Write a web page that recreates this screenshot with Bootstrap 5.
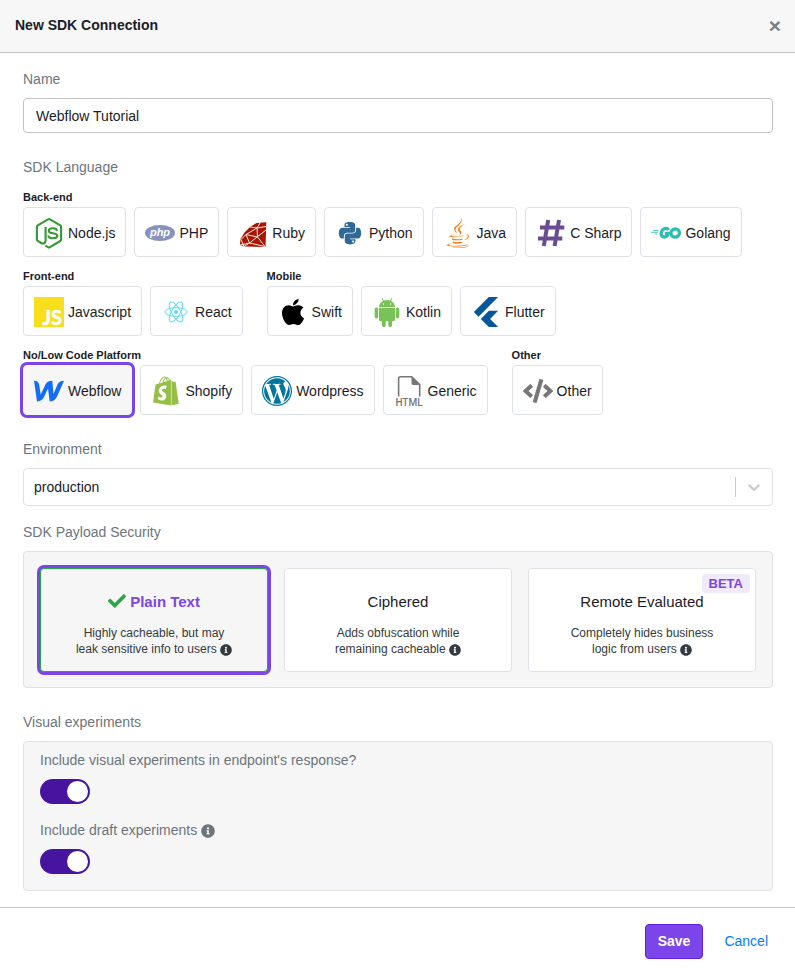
<!DOCTYPE html>
<html lang="en">
<head>
<meta charset="utf-8">
<meta name="viewport" content="width=device-width, initial-scale=1">
<title>New SDK Connection</title>
<link href="https://cdn.jsdelivr.net/npm/bootstrap@5.3.0/dist/css/bootstrap.min.css" rel="stylesheet">
<style>
  :root { --ink: #1c1c28; --accent: #7c45e9; --line: #dee2e6; --soft: #f6f6f6; }
  body { font-family: "Liberation Sans", Arial, sans-serif; font-size: 14px; line-height: 21px; color: var(--ink); }
  .dialog-head { background: #f7f7f7; border-bottom: 1px solid #c4c4c4; padding: 15px 14px 15px 15px; height: 53px; }
  .dialog-head h1 { font-size: 14px; line-height: 21px; }
  .close-x { font-size: 21px; line-height: 21px; color: #7f7f7f; padding: 0; }
  .dialog-body { padding: 16px 22px 16px 23px; }
  .dialog-foot { border-top: 1px solid #c4c4c4; padding: 16px 14px; }
  .field-label { color: #6c757d; margin-bottom: 8px; display: block; }
  .lang-label { margin-bottom: 10px; }
  .name-input { font-size: 14px; line-height: 21px; color: var(--ink); border-color: #c4c4c4; border-radius: 4px; padding: 7px 12px 5px; }
  .env-select {
    font-size: 14px; line-height: 20px; color: var(--ink); height: 38px; padding: 8px 60px 8px 10px;
    border-color: var(--line); border-radius: 4px;
    background-image: url("data:image/svg+xml,%3Csvg xmlns='http://www.w3.org/2000/svg' viewBox='0 0 20 20'%3E%3Cpath fill='%23ccc' d='M4.516 7.548c0.436-0.446 1.043-0.481 1.576 0l3.908 3.747 3.908-3.747c0.533-0.481 1.141-0.446 1.574 0 0.436 0.445 0.408 1.197 0 1.615-0.406 0.418-4.695 4.502-4.695 4.502-0.217 0.223-0.502 0.335-0.787 0.335s-0.57-0.112-0.789-0.335c0 0-4.287-4.084-4.695-4.502s-0.436-1.17 0-1.615z'/%3E%3C/svg%3E"), linear-gradient(#ccc, #ccc);
    background-position: right 8px center, right 36px center;
    background-size: 20px 20px, 1px 20px;
  }
  .lang-groups { row-gap: 10px; column-gap: 24px; }
  .group-name { font-size: 11px; line-height: 19px; font-weight: 700; margin: 0; white-space: nowrap; }
  .lang-btn, .secure-btn { background: #fff; border: 1px solid var(--line); border-radius: 4px; color: var(--ink); }
  .lang-btn { padding: 10px 10px 8px; height: 50px; gap: 4px; }
  .lang-btn svg { width: 30px; height: 30px; flex: none; overflow: visible; }
  .is-picked { background: var(--soft); border-color: var(--soft); box-shadow: 0 0 0 3px var(--accent); }
  .panel { background: var(--soft); border: 1px solid var(--line); border-radius: 4px; }
  .security { padding: 16px 16px 15px; }
  .secure-btn { padding: 22px 4px 14px; flex: 1 1 0; }
  .secure-btn.is-picked { background: var(--soft); border-color: #28a745; }
  .secure-title { font-size: 15px; line-height: 22px; margin-bottom: 12px; display: block; }
  .is-picked .secure-title { color: var(--accent); font-weight: 700; }
  .secure-text { font-size: 12px; line-height: 16px; color: #343a40; display: block; }
  .tick { width: 18px; height: 18px; vertical-align: -3px; fill: #28a745; }
  .info { width: 12px; height: 12px; vertical-align: -3px; fill: currentColor; }
  .info-lg { width: 14px; height: 14px; vertical-align: -3px; fill: currentColor; }
  .beta { top: 5px; right: 5px; background: #f1eafc; color: var(--accent); font-size: 13px; font-weight: 700; line-height: 19px; padding: 0 7px; border-radius: 4px; }
  .experiments { padding: 8px 16px 16px; }
  .toggle.form-check-input {
    width: 50px; height: 25px; margin: 0; display: block; float: none; border: 0; background-color: #46149f; background-size: 21px 21px;
    background-position: right 2px center; background-repeat: no-repeat; border-radius: 13px;
    background-image: url("data:image/svg+xml,%3Csvg xmlns='http://www.w3.org/2000/svg' viewBox='0 0 21 21'%3E%3Ccircle cx='10.5' cy='10.5' r='10.5' fill='%23fff'/%3E%3C/svg%3E");
  }
  .toggle.form-check-input:not(:checked) { background-color: #adb5bd; background-position: left 2px center; }
  .foot-btn { font-size: 14px; line-height: 21px; padding: 6px 12px; border-radius: 4px; }
  .save-btn, .save-btn:hover { background: var(--accent); border-color: #6320e0; color: #fff; font-weight: 700; }
  .cancel-btn { color: #007bff; text-decoration: none; }
</style>
<script src="https://cdn.jsdelivr.net/npm/bootstrap@5.3.0/dist/js/bootstrap.bundle.min.js"></script>
</head>
<body>
<svg class="d-none" aria-hidden="true">
  <symbol id="info" viewBox="0 0 512 512"><path d="M256 8C119.043 8 8 119.083 8 256c0 136.997 111.043 248 248 248s248-111.003 248-248C504 119.083 392.957 8 256 8zm0 110c23.196 0 42 18.804 42 42s-18.804 42-42 42-42-18.804-42-42 18.804-42 42-42zm56 254c0 6.627-5.373 12-12 12h-88c-6.627 0-12-5.373-12-12v-24c0-6.627 5.373-12 12-12h12v-64h-12c-6.627 0-12-5.373-12-12v-24c0-6.627 5.373-12 12-12h64c6.627 0 12 5.373 12 12v100h12c6.627 0 12 5.373 12 12v24z"/></symbol>
</svg>
<form>
  <header class="dialog-head d-flex justify-content-between align-items-start">
    <h1 class="fw-bold m-0">New SDK Connection</h1>
    <button type="button" class="close-x border-0 bg-transparent fw-bold" aria-label="Close">×</button>
  </header>

  <main class="dialog-body">
    <div class="mb-4">
      <label class="field-label" for="sdk-name">Name</label>
      <input class="form-control name-input" id="sdk-name" type="text" value="Webflow Tutorial">
    </div>

    <div class="mb-4">
      <div class="field-label lang-label" id="lang-label">SDK Language</div>
      <div class="d-flex flex-wrap lang-groups" role="group" aria-labelledby="lang-label">
        <section>
          <h2 class="group-name">Back-end</h2>
          <div class="d-flex flex-wrap gap-2">
            <button type="button" class="lang-btn d-flex align-items-center">
              <svg viewBox="0 1 30 30" fill="none" stroke="#339933" stroke-width="2.1" stroke-linejoin="round" aria-hidden="true"><path d="M11.6 10v13.600c0 2.600-2.200 3.600-4.300 2.400l-3.600-2.100c-.5-.3-.8-.8-.8-1.300V9.800c0-.6.3-1.100.8-1.400L14 2.300c.6-.4 1.400-.4 2 0l10.300 6.100c.5.3.8.8.8 1.400v12.800c0 .6-.3 1.100-.8 1.400L16 30.200c-.6.4-1.400.4-2 0l-2.600-1.500"/><path d="M23 13.800c-.2-2-1.800-2.500-4.200-2.500-2.500 0-4 .8-4 2.500 0 2 2 2.300 4.200 2.500 2.700.3 4.200.7 4.200 2.500s-1.500 2.500-4.200 2.500c-3 0-4.500-.8-4.700-3"/></svg>
              Node.js</button>
            <button type="button" class="lang-btn d-flex align-items-center">
              <svg viewBox="0 0 30 30" aria-hidden="true"><ellipse cx="15" cy="15" rx="15" ry="8" fill="#8892bf"/><text x="15" y="18" text-anchor="middle" font-size="11" font-weight="700" font-style="italic" fill="#fff">php</text></svg>
              PHP</button>
            <button type="button" class="lang-btn d-flex align-items-center">
              <svg viewBox="0 0 30 30" aria-hidden="true"><path fill="#aa1401" d="M28.300 4.200 27.500 29 6.500 28.500 1.900 27 2.500 21 6.500 14.500 12 9 18.500 5z"/><path fill="none" stroke="#fff" stroke-width=".9" d="M3 21.500 8 16.500 19 10 28 8.500M8 16.500l3.500 8.500L28 12M11.500 25 2 27M3 21.500l3 7 5.500-3.500L27 28.500 19.500 19 19 10l-7-1M19 10l3-5M8 16.500l11.500 2.500"/></svg>
              Ruby</button>
            <button type="button" class="lang-btn d-flex align-items-center">
              <svg viewBox="-76 -48 600 600" fill="#306998" aria-hidden="true"><path d="M439.8 200.5c-7.700-30.900-22.300-54.200-53.400-54.200h-40.100v47.400c0 36.800-31.200 67.800-66.800 67.800H172.700c-29.200 0-53.400 25-53.400 54.300v101.800c0 29 25.200 46 53.400 54.300 33.800 9.900 66.300 11.700 106.800 0 26.900-7.800 53.400-23.500 53.400-54.300v-40.700H226.200v-13.600h160.200c31.100 0 42.600-21.700 53.400-54.200 11.200-33.500 10.700-65.700 0-108.600zM286.200 404c11.100 0 20.100 9.100 20.100 20.300 0 11.300-9 20.400-20.100 20.400-11 0-20.100-9.200-20.100-20.400.1-11.300 9.100-20.300 20.100-20.300zM167.800 248.100h106.800c29.700 0 53.400-24.500 53.400-54.400V91.900c0-29-24.400-50.700-53.400-55.600-35.800-5.900-74.700-5.600-106.800.1-45.200 8-53.400 24.700-53.400 55.600v40.700h106.900v13.600h-147c-31.100 0-58.300 18.700-66.800 54.200-9.800 40.700-10.200 66.100 0 108.600 7.600 31.600 25.700 54.200 56.800 54.200H101v-48.800c0-35.300 30.500-66.400 66.800-66.400zm-6.700-142.600c-11.100 0-20.100-9.100-20.100-20.300.1-11.300 9-20.400 20.100-20.400 11 0 20.100 9.200 20.100 20.400s-9 20.300-20.100 20.300z"/></svg>
              Python</button>
            <button type="button" class="lang-btn d-flex align-items-center">
              <svg viewBox="0 0 384 512" fill="#f58219" aria-hidden="true"><path d="M277.740 312.900c9.800-6.700 23.400-12.500 23.400-12.500s-38.700 7-77.200 10.200c-47.100 3.900-97.700 4.700-123.100 1.300-60.100-8 33-30.100 33-30.100s-36.100-2.400-80.600 19c-52.500 25.400 130 37 224.500 12.100zm-85.400-32.100c-19-42.700-83.100-80.200 0-145.800C296 53.200 242.840 0 242.840 0c21.500 84.500-75.600 110.100-110.700 162.600-23.900 35.900 11.700 74.400 60.200 118.200zm114.600-176.200c.1 0-175.200 43.800-91.500 140.200 24.700 28.400-6.500 54-6.500 54s62.700-32.400 33.900-72.900c-26.900-37.800-47.500-56.600 64.100-121.300zm-6.100 270.500a12.190 12.190 0 0 1-2 2.600c128.300-33.700 81.100-118.900 19.800-97.300a17.330 17.330 0 0 0-8.200 6.300 70.450 70.450 0 0 1 11-3c31-6.500 75.500 41.500-20.600 91.400zM348 437.400s14.500 11.900-15.900 21.200c-57.900 17.500-240.800 22.800-291.600.7-18.300-7.900 16-19 26.800-21.300 11.200-2.400 17.700-2 17.700-2-20.300-14.300-131.300 28.100-56.400 40.200C232.840 509.400 401 461.300 348 437.400zM124.440 396c-78.700 22 47.900 67.400 148.100 24.500a185.890 185.890 0 0 1-28.200-13.800c-44.700 8.500-65.400 9.100-106 4.500-33.500-3.800-13.900-15.200-13.900-15.200zm179.800 97.200c-78.700 14.800-175.800 13.100-233.300 3.600 0-.1 11.800 9.700 72.400 13.600 92.200 5.900 233.800-3.300 237.100-46.900 0 0-6.400 16.500-76.200 29.700zM260.640 353c-59.200 11.400-93.500 11.100-136.800 6.600-33.500-3.500-11.600-19.700-11.600-19.700-86.800 28.800 48.200 61.400 169.500 25.900a60.370 60.370 0 0 1-21.100-12.800z"/></svg>
              Java</button>
            <button type="button" class="lang-btn d-flex align-items-center">
              <svg viewBox="0 0 30 30" stroke="#684d95" stroke-width="4" aria-hidden="true"><path d="M12.200 2 7.800 28M23 2l-4.400 26M4 9.500h24.300M2 20.500h24.300"/></svg>
              C Sharp</button>
            <button type="button" class="lang-btn d-flex align-items-center">
              <svg viewBox="0 0 30 30" aria-hidden="true"><path stroke="#2dbcaf" stroke-width=".8" d="M2 12.500h5.500M0 14.300h7M4 16h2.500"/><g fill="none" stroke="#2dbcaf" stroke-width="3.300"><path d="M17.600 12c-1.200-2.200-4-1.800-5.600-.4-2.200 2-2.700 5.600-.2 7 2.500 1.200 5.200-.6 5.700-3.300h-3.700"/><ellipse cx="24.200" cy="15" rx="4.300" ry="4" transform="rotate(-30 24.200 15)"/></g></svg>
              Golang</button>
          </div>
        </section>
        <div class="w-100 d-flex flex-wrap lang-groups">
          <section>
            <h2 class="group-name">Front-end</h2>
            <div class="d-flex flex-wrap gap-2">
              <button type="button" class="lang-btn d-flex align-items-center">
                <svg viewBox="0 0 30 30" aria-hidden="true"><path fill="#f7df1e" d="M0 0h30v30H0z"/><text x="28" y="28" text-anchor="end" font-family="Lato, sans-serif" font-size="20" font-weight="700" fill="#fff" stroke="#fff" stroke-width=".5">JS</text></svg>
                Javascript</button>
              <button type="button" class="lang-btn d-flex align-items-center">
                <svg viewBox="0 0 30 30" fill="none" stroke="#61dafb" aria-hidden="true"><circle cx="15" cy="15" r="2.100" fill="#61dafb" stroke="none"/><ellipse cx="15" cy="15" rx="11.200" ry="4.300"/><ellipse cx="15" cy="15" rx="11.200" ry="4.300" transform="rotate(60 15 15)"/><ellipse cx="15" cy="15" rx="11.200" ry="4.300" transform="rotate(120 15 15)"/></svg>
                React</button>
            </div>
          </section>
          <section>
            <h2 class="group-name">Mobile</h2>
            <div class="d-flex flex-wrap gap-2">
              <button type="button" class="lang-btn d-flex align-items-center">
                <svg viewBox="-64 0 512 512" aria-hidden="true"><path d="M318.700 268.700c-.2-36.700 16.400-64.400 50-84.800-18.800-26.900-47.200-41.700-84.700-44.600-35.500-2.800-74.300 20.700-88.500 20.700-15 0-49.400-19.700-76.400-19.700C63.300 141.200 4 184.800 4 273.500q0 39.300 14.400 81.200c12.800 36.700 59 126.700 107.200 125.200 25.200-.6 43-17.900 75.800-17.900 31.800 0 48.300 17.900 76.400 17.900 48.600-.7 90.400-82.500 102.600-119.300-65.200-30.700-61.700-90-61.700-91.900zm-56.600-164.200c27.300-32.400 24.800-61.900 24-72.500-24.100 1.400-52 16.400-67.900 34.900-17.500 19.800-27.800 44.300-25.600 71.900 26.100 2 49.900-11.400 69.500-34.300z"/></svg>
                Swift</button>
              <button type="button" class="lang-btn d-flex align-items-center">
                <svg viewBox="0 0 30 30" fill="#78c257" aria-hidden="true"><path d="M7 10.300c0-3 1.700-5.300 4-6.400L9.700 1.400l.6-.4 1.500 2.500a9.500 9.500 0 0 1 6.400 0L19.700 1l.6.4L19 3.900c2.300 1.100 4 3.400 4 6.400z"/><path d="M7 11h16v11.500c0 1-.8 1.700-1.700 1.700H20v4c0 2.400-3.700 2.400-3.700 0v-4h-2.600v4c0 2.400-3.700 2.400-3.700 0v-4H8.700c-1 0-1.700-.7-1.700-1.700z"/><rect x="2.700" y="10.500" width="3.500" height="11" rx="1.750"/><rect x="23.800" y="10.500" width="3.500" height="11" rx="1.750"/><circle cx="11.400" cy="7" r=".7" fill="#fff"/><circle cx="18.600" cy="7" r=".7" fill="#fff"/></svg>
                Kotlin</button>
              <button type="button" class="lang-btn d-flex align-items-center">
                <svg viewBox="0 0 24 24" fill="#02569b" aria-hidden="true"><path d="M14.314 0L2.300 12 6 15.700 21.684.013h-7.357zm.014 11.072L7.857 17.530l6.470 6.470H21.700l-6.460-6.468 6.460-6.460h-7.370z"/></svg>
                Flutter</button>
            </div>
          </section>
        </div>
        <div class="w-100 d-flex flex-wrap lang-groups">
          <section>
            <h2 class="group-name">No/Low Code Platform</h2>
            <div class="d-flex flex-wrap gap-2">
              <button type="button" class="lang-btn is-picked d-flex align-items-center" aria-pressed="true">
                <svg viewBox="0 0 30 30" fill="#146ef5" aria-hidden="true"><path d="M0 4.800C3.500 4.800 5 6.500 5.300 9.500L6.700 18.500 11.500 8.500C12.800 6 14.500 4.800 18.300 4.800L19.500 18 23.500 8.500C24.800 6 26.700 4.800 30 4.800L23.500 19.500C22 23 19.800 25.400 15.700 25.400L14 12.500 10.500 20C8.900 23.500 7 25.400 3 25.400Z"/></svg>
                Webflow</button>
              <button type="button" class="lang-btn d-flex align-items-center">
                <svg viewBox="0 0 448 512" fill="#95bf47" aria-hidden="true"><path d="M388.320,104.100a4.660,4.660,0,0,0-4.400-4c-2,0-37.230-.8-37.230-.8s-21.610-20.820-29.620-28.830V503.200L442.760,472S388.720,106.500,388.320,104.100ZM288.650,70.470a116.670,116.670,0,0,0-7.210-17.610C271,32.850,255.420,22,237,22a15,15,0,0,0-4,.4c-.4-.8-1.200-1.200-1.600-2C223.400,11.630,213,7.630,200.580,8c-24,.8-48,18-67.250,48.830-13.610,21.620-24,48.840-26.820,70.060-27.620,8.400-46.830,14.410-47.230,14.810-14,4.400-14.410,4.800-16,18-1.200,10-38,291.820-38,291.820L307.860,504V65.670a41.660,41.660,0,0,0-4.400.4S297.860,67.670,288.650,70.470ZM233.410,87.690c-16,4.800-33.630,10.400-50.840,15.610,4.800-18.820,14.410-37.630,25.620-50,4.400-4.400,10.410-9.610,17.210-12.810C232.210,54.860,233.810,74.480,233.410,87.690ZM200.580,24.440A27.490,27.490,0,0,1,215,28c-6.400,3.200-12.810,8.410-18.810,14.410-15.210,16.420-26.820,42-31.620,66.450-14.420,4.410-28.830,8.810-42,12.810C131.330,83.280,163.750,25.240,200.580,24.440ZM154.150,244.610c1.600,25.610,69.250,31.220,73.250,91.660,2.800,47.640-25.220,80.060-65.650,82.470-48.830,3.200-75.650-25.620-75.650-25.620l10.400-44s26.820,20.420,48.440,18.820c14-.8,19.220-12.410,18.810-20.420-2-33.620-57.240-31.620-60.840-86.860-3.200-46.440,27.220-93.270,94.470-97.680,26-1.600,39.230,4.810,39.230,4.810L221.400,225.390s-17.210-8-37.630-6.400C154.150,221,153.750,239.800,154.150,244.610ZM249.420,82.880c0-12-1.600-29.220-7.210-43.630,18.420,3.600,27.220,24,31.230,36.430Q262.630,78.680,249.420,82.880Z"/></svg>
                Shopify</button>
              <button type="button" class="lang-btn d-flex align-items-center">
                <svg viewBox="8 8 496 496" fill="#00769d" aria-hidden="true"><path d="M61.700 169.400l101.500 278C92.200 413 43.300 340.200 43.300 256c0-30.900 6.600-60.100 18.400-86.600zm337.900 75.900c0-26.300-9.400-44.500-17.500-58.700-10.800-17.500-20.900-32.400-20.900-49.900 0-19.600 14.800-37.800 35.700-37.800.9 0 1.800.1 2.800.2-37.900-34.700-88.300-55.900-143.700-55.900-74.300 0-139.700 38.100-177.800 95.900 5 .2 9.700.3 13.700.3 22.200 0 56.700-2.700 56.700-2.700 11.500-.7 12.800 16.200 1.400 17.500 0 0-11.500 1.300-24.300 2l77.500 230.400L249.800 247l-33.100-90.800c-11.500-.7-22.300-2-22.300-2-11.500-.7-10.100-18.200 1.300-17.500 0 0 35.100 2.700 56 2.700 22.200 0 56.700-2.700 56.700-2.700 11.500-.7 12.800 16.200 1.400 17.500 0 0-11.500 1.300-24.300 2l76.900 228.700 21.200-70.900c9-29.400 16-50.500 16-68.700zm-139.900 29.300l-63.800 185.500c19.100 5.600 39.200 8.700 60.100 8.700 24.800 0 48.500-4.300 70.600-12.100-.6-.9-1.100-1.900-1.500-2.900l-65.400-179.200zm183-120.700c.9 6.800 1.400 14 1.400 21.900 0 21.600-4 45.800-16.200 76.200l-65 187.900C426.200 403 468.700 334.500 468.700 256c0-37-9.400-71.800-26-102.100zM504 256c0 136.800-111.300 248-248 248C119.200 504 8 392.700 8 256 8 119.200 119.200 8 256 8c136.700 0 248 111.200 248 248zm-20 0C484 130 382 28 256 28S28 130 28 256s102 228 228 228 228-102 228-228z"/></svg>
                Wordpress</button>
              <button type="button" class="lang-btn d-flex align-items-center">
                <svg viewBox="0 0 30 30" aria-hidden="true"><path fill="none" stroke="#777" stroke-width="1.600" d="M4.600 20.500V2.700c0-1.200.8-2 2-2h11.200L25.700 8.500v12"/><path fill="#777" d="M17.500.5 26 9h-6.500c-1.200 0-2-.8-2-2z"/><text x="15" y="30" text-anchor="middle" font-family="Roboto, sans-serif" font-size="10" font-weight="500" fill="#777">HTML</text></svg>
                Generic</button>
            </div>
          </section>
          <section>
            <h2 class="group-name">Other</h2>
            <div class="d-flex flex-wrap gap-2">
              <button type="button" class="lang-btn d-flex align-items-center">
                <svg viewBox="0 0 640 512" fill="#777" aria-hidden="true"><path d="M278.900 511.500l-61-17.700c-6.400-1.800-10-8.500-8.200-14.900L346.200 8.700c1.800-6.400 8.500-10 14.900-8.200l61 17.700c6.400 1.800 10 8.500 8.200 14.900L293.800 503.300c-1.900 6.400-8.500 10.100-14.900 8.200zm-114-112.200l43.500-46.400c4.600-4.900 4.300-12.700-.8-17.200L117 256l90.600-79.700c5.100-4.500 5.500-12.300.8-17.200l-43.500-46.400c-4.500-4.800-12.100-5.100-17-.5L3.800 247.200c-5.100 4.700-5.100 12.800 0 17.500l144.100 135.100c4.900 4.600 12.500 4.400 17-.5zm327.200.6l144.100-135.100c5.100-4.700 5.100-12.800 0-17.500L492.100 112.100c-4.800-4.500-12.400-4.300-17 .5L431.600 159c-4.600 4.900-4.300 12.700.8 17.200L523 256l-90.600 79.700c-5.100 4.500-5.500 12.300-.8 17.200l43.500 46.400c4.500 4.900 12.100 5.100 17 .6z"/></svg>
                Other</button>
            </div>
          </section>
        </div>
      </div>
    </div>

    <div class="mb-3">
      <label class="field-label" for="sdk-env">Environment</label>
      <select class="form-select env-select" id="sdk-env">
        <option selected>production</option>
      </select>
    </div>

    <div class="mb-4">
      <div class="field-label" id="security-label">SDK Payload Security</div>
      <div class="panel security d-flex gap-3" role="group" aria-labelledby="security-label">
        <button type="button" class="secure-btn is-picked" aria-pressed="true">
          <span class="secure-title"><svg class="tick" viewBox="0 0 512 512" aria-hidden="true"><path d="M173.898 439.404l-166.400-166.400c-9.997-9.997-9.997-26.206 0-36.204l36.203-36.204c9.997-9.998 26.207-9.998 36.204 0L192 312.690 432.095 72.596c9.997-9.997 26.207-9.997 36.204 0l36.203 36.204c9.997 9.997 9.997 26.206 0 36.204l-294.400 294.401c-9.998 9.997-26.207 9.997-36.204-.001z"/></svg> Plain Text</span>
          <span class="secure-text">Highly cacheable, but may<br>leak sensitive info to users <svg class="info" aria-hidden="true"><use href="#info"/></svg></span>
        </button>
        <button type="button" class="secure-btn">
          <span class="secure-title">Ciphered</span>
          <span class="secure-text">Adds obfuscation while<br>remaining cacheable <svg class="info" aria-hidden="true"><use href="#info"/></svg></span>
        </button>
        <button type="button" class="secure-btn position-relative">
          <span class="beta position-absolute">BETA</span>
          <span class="secure-title">Remote Evaluated</span>
          <span class="secure-text">Completely hides business<br>logic from users <svg class="info" aria-hidden="true"><use href="#info"/></svg></span>
        </button>
      </div>
    </div>

    <div>
      <div class="field-label">Visual experiments</div>
      <div class="panel experiments">
        <div class="mb-3">
          <label class="field-label" for="include-visual">Include visual experiments in endpoint's response?</label>
          <input class="form-check-input toggle" type="checkbox" role="switch" id="include-visual" checked>
        </div>
        <label class="field-label" for="include-draft">Include draft experiments <svg class="info-lg" aria-hidden="true"><use href="#info"/></svg></label>
        <input class="form-check-input toggle" type="checkbox" role="switch" id="include-draft" checked>
      </div>
    </div>
  </main>

  <footer class="dialog-foot d-flex justify-content-end gap-2">
    <button type="submit" class="btn foot-btn save-btn">Save</button>
    <button type="button" class="btn foot-btn cancel-btn">Cancel</button>
  </footer>
</form>
</body>
</html>
